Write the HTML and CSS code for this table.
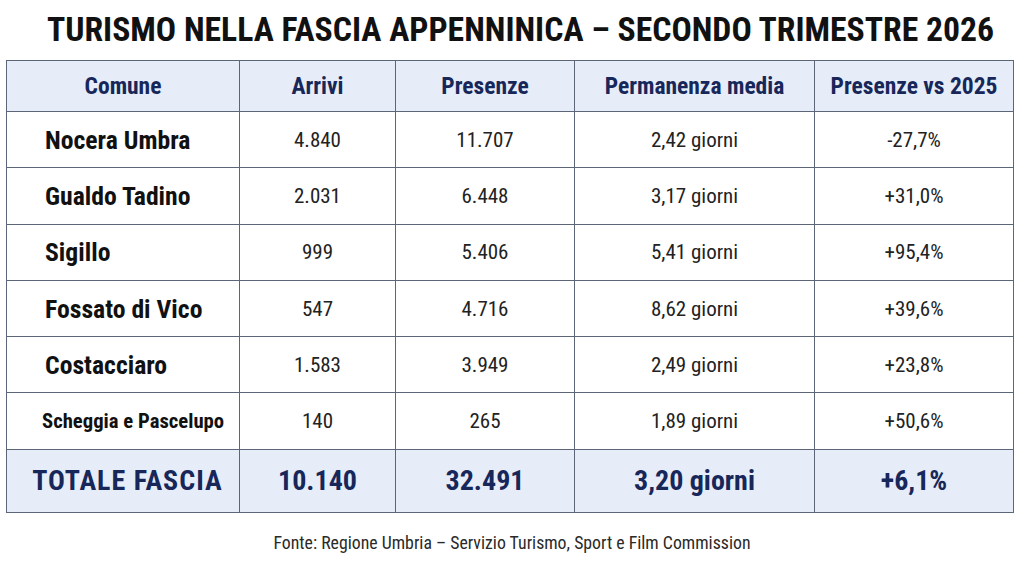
FILE: index.html
```html
<!DOCTYPE html>
<html lang="it">
<head>
<meta charset="utf-8">
<title>Turismo nella fascia appenninica</title>
<link rel="stylesheet" href="styles.css">
</head>
<body>
<main class="page">
  <h1 class="title">TURISMO NELLA FASCIA APPENNINICA – SECONDO TRIMESTRE 2026</h1>
  <table class="data">
    <colgroup>
      <col class="c1"><col class="c2"><col class="c3"><col class="c4"><col class="c5">
    </colgroup>
    <thead>
      <tr class="head">
        <th>Comune</th><th>Arrivi</th><th>Presenze</th><th>Permanenza media</th><th>Presenze vs 2025</th>
      </tr>
    </thead>
    <tbody>
      <tr class="row"><td class="name">Nocera Umbra</td><td>4.840</td><td>11.707</td><td>2,42 giorni</td><td>-27,7%</td></tr>
      <tr class="row"><td class="name">Gualdo Tadino</td><td>2.031</td><td>6.448</td><td>3,17 giorni</td><td>+31,0%</td></tr>
      <tr class="row"><td class="name">Sigillo</td><td>999</td><td>5.406</td><td>5,41 giorni</td><td>+95,4%</td></tr>
      <tr class="row"><td class="name">Fossato di Vico</td><td>547</td><td>4.716</td><td>8,62 giorni</td><td>+39,6%</td></tr>
      <tr class="row"><td class="name">Costacciaro</td><td>1.583</td><td>3.949</td><td>2,49 giorni</td><td>+23,8%</td></tr>
      <tr class="row"><td class="name small">Scheggia e Pascelupo</td><td>140</td><td>265</td><td>1,89 giorni</td><td>+50,6%</td></tr>
    </tbody>
    <tfoot>
      <tr class="total"><td class="label">TOTALE FASCIA</td><td>10.140</td><td>32.491</td><td>3,20 giorni</td><td>+6,1%</td></tr>
    </tfoot>
  </table>
  <p class="source">Fonte: Regione Umbria – Servizio Turismo, Sport e Film Commission</p>
</main>
</body>
</html>
```

FILE: styles.css
```css
html, body {
  margin: 0;
  padding: 0;
  background: #ffffff;
}

body {
  font-family: "Roboto Condensed", "Liberation Sans", sans-serif;
  color: #1b1b1b;
}

.page {
  width: 1024px;
  height: 576px;
  display: flex;
  flex-direction: column;
  align-items: center;
}

.title {
  margin: 9px 0 0 17px;
  font-size: 33.7px;
  line-height: 42px;
  font-weight: 700;
  color: #111111;
  white-space: nowrap;
}

.data {
  margin: 9px 0 0 -4px;
  width: 1007px;
  border-collapse: collapse;
  table-layout: fixed;
}

.c1 { width: 233px; }
.c2 { width: 156px; }
.c3 { width: 179px; }
.c4 { width: 240px; }
.c5 { width: 199px; }

.data th,
.data td {
  border: 1.5px solid #5d6679;
  text-align: center;
  padding: 0;
  white-space: nowrap;
}

.head th {
  height: 50px;
  background: #e6edf8;
  color: #17275a;
  font-size: 23.5px;
  font-weight: 700;
}

.row td {
  height: 55.3px;
  font-size: 21px;
  color: #222222;
  background: #ffffff;
}

.row td.name {
  text-align: left;
  padding-left: 38px;
  font-size: 25.7px;
  font-weight: 700;
  color: #111111;
}

.row td.name.small {
  padding-left: 35px;
  font-size: 20.7px;
}

.total td {
  height: 62px;
  background: #e6edf8;
  color: #17275a;
  font-size: 28px;
  font-weight: 700;
}

.total td.label {
  letter-spacing: 1px;
  padding-left: 9px;
}

.source {
  margin: 19px 0 0 0;
  font-size: 17.8px;
  color: #2a2a2a;
}
```
